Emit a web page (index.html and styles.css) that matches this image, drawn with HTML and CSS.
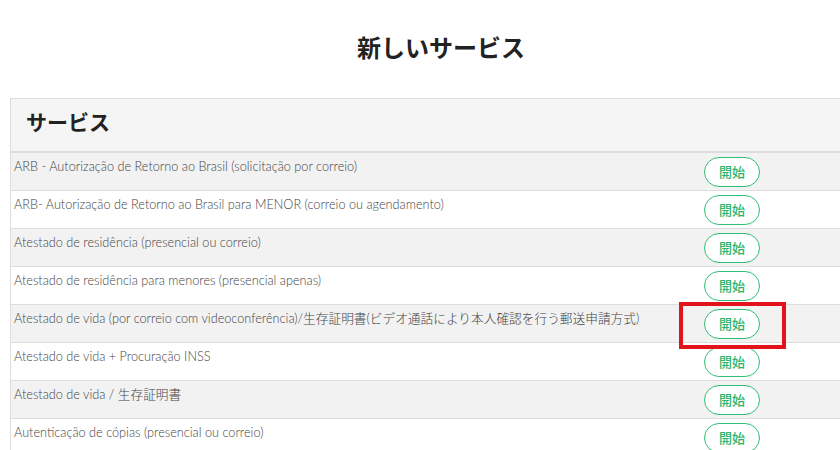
FILE: index.html
```html
<!DOCTYPE html>
<html lang="ja">
<head>
<meta charset="utf-8">
<link rel="stylesheet" href="styles.css">
</head>
<body>
<div class="page">
  <h1 class="title">新しいサービス</h1>
  <div class="table">
    <div class="head">サービス</div>
    <div class="row odd"><div class="name">ARB - Autorização de Retorno ao Brasil (solicitação por correio)</div><div class="act"><button class="btn">開始</button></div></div>
    <div class="row"><div class="name">ARB- Autorização de Retorno ao Brasil para MENOR (correio ou agendamento)</div><div class="act"><button class="btn">開始</button></div></div>
    <div class="row odd"><div class="name">Atestado de residência (presencial ou correio)</div><div class="act"><button class="btn">開始</button></div></div>
    <div class="row"><div class="name">Atestado de residência para menores (presencial apenas)</div><div class="act"><button class="btn">開始</button></div></div>
    <div class="row odd"><div class="name">Atestado de vida (por correio com videoconferência)/生存証明書(ビデオ通話により本人確認を行う郵送申請方式)</div><div class="act"><button class="btn">開始</button></div></div>
    <div class="row"><div class="name">Atestado de vida + Procuração INSS</div><div class="act"><button class="btn">開始</button></div></div>
    <div class="row odd"><div class="name">Atestado de vida / 生存証明書</div><div class="act"><button class="btn">開始</button></div></div>
    <div class="row"><div class="name">Autenticação de cópias (presencial ou correio)</div><div class="act"><button class="btn">開始</button></div></div>
  </div>
  <div class="highlight"></div>
</div>
</body>
</html>
```
FILE: styles.css
```css
html, body {
  margin: 0;
  padding: 0;
  background: #fff;
  overflow: hidden;
}
.page {
  position: relative;
  width: 840px;
  height: 450px;
  overflow: hidden;
  font-family: Lato, "Noto Sans CJK JP", sans-serif;
}
.title {
  margin: 0;
  height: 98px;
  display: flex;
  align-items: center;
  justify-content: center;
  padding: 0 0 6px 42px;
  box-sizing: border-box;
  font-family: "Noto Sans CJK JP", sans-serif;
  font-size: 24px;
  font-weight: 700;
  color: #222;
}
.table {
  margin-left: 10px;
  width: 900px;
  border-left: 1px solid #ddd;
}
.head {
  height: 55px;
  box-sizing: border-box;
  background: #f5f5f5;
  border-top: 1px solid #ddd;
  border-bottom: 2px solid #ddd;
  padding: 0 0 8px 15px;
  display: flex;
  align-items: center;
  font-family: "Noto Sans CJK JP", sans-serif;
  font-size: 21px;
  font-weight: 700;
  color: #222;
}
.row {
  display: flex;
  height: 38px;
  box-sizing: border-box;
  border-bottom: 1px solid #ddd;
  background: #fff;
}
.row.odd {
  background: #f2f2f2;
}
.name {
  flex: 0 0 680px;
  padding: 5px 3px 0;
  box-sizing: border-box;
  font-size: 12.7px;
  font-weight: 300;
  color: #444;
  line-height: 16px;
  white-space: nowrap;
}
.act {
  flex: 1;
  padding: 4px 0 0 13px;
}
.btn {
  display: block;
  width: 56px;
  height: 30px;
  border: 1px solid #2dbf74;
  border-radius: 15px;
  background: #fff;
  color: #2bb46c;
  font-family: "Noto Sans CJK JP", sans-serif;
  font-size: 13px;
  font-weight: 500;
  padding: 0;
  line-height: 28px;
}
.highlight {
  position: absolute;
  left: 679px;
  top: 302px;
  width: 107px;
  height: 47px;
  box-sizing: border-box;
  border: 4px solid #e3131b;
}
```
